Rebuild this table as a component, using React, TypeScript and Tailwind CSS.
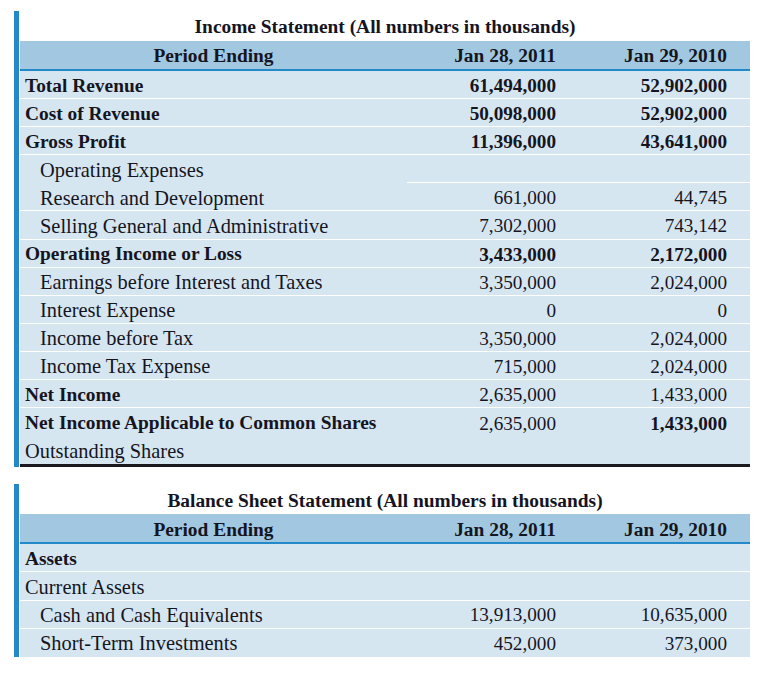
type Row = {
  label: string;
  a?: string;
  b?: string;
  bold?: boolean;
  indent?: boolean;
  boldB?: boolean;
  noLine?: boolean;
  noLabelLine?: boolean;
};

const income: Row[] = [
  { label: "Total Revenue", a: "61,494,000", b: "52,902,000", bold: true },
  { label: "Cost of Revenue", a: "50,098,000", b: "52,902,000", bold: true },
  { label: "Gross Profit", a: "11,396,000", b: "43,641,000", bold: true },
  { label: "Operating Expenses", indent: true, noLabelLine: true },
  { label: "Research and Development", a: "661,000", b: "44,745", indent: true },
  { label: "Selling General and Administrative", a: "7,302,000", b: "743,142", indent: true },
  { label: "Operating Income or Loss", a: "3,433,000", b: "2,172,000", bold: true },
  { label: "Earnings before Interest and Taxes", a: "3,350,000", b: "2,024,000", indent: true },
  { label: "Interest Expense", a: "0", b: "0", indent: true },
  { label: "Income before Tax", a: "3,350,000", b: "2,024,000", indent: true },
  { label: "Income Tax Expense", a: "715,000", b: "2,024,000", indent: true },
  { label: "Net Income", a: "2,635,000", b: "1,433,000", bold: true },
  { label: "Net Income Applicable to Common Shares", a: "2,635,000", b: "1,433,000", bold: true, boldB: true, noLine: true },
  { label: "Outstanding Shares", noLine: true },
];

const balance: Row[] = [
  { label: "Assets", bold: true },
  { label: "Current Assets" },
  { label: "Cash and Cash Equivalents", a: "13,913,000", b: "10,635,000", indent: true },
  { label: "Short-Term Investments", a: "452,000", b: "373,000", indent: true, noLine: true },
];

// which rows print their numbers in bold
const boldNums = new Set(["Total Revenue", "Cost of Revenue", "Gross Profit", "Operating Income or Loss"]);

function Table({ title, rows, closed }: { title: string; rows: Row[]; closed?: boolean }) {
  return (
    <div className="flex">
      <div className="w-[5px] bg-[#2389c9]" />
      <div className="ml-[1px] w-[730px]">
        <div className="flex h-[29px] items-center justify-center pt-[3px] text-[19.4px] font-bold">{title}</div>
        <div className="flex h-[31px] border-t border-white bg-[#a1c8e0] pt-[2px] text-[19.4px] font-bold border-b-2 border-b-[#2389c9]">
          <div className="flex w-[387px] items-center justify-center">Period Ending</div>
          <div className="flex w-[172px] items-center justify-end pr-[23px]">Jan 28, 2011</div>
          <div className="flex w-[171px] items-center justify-end pr-[23px]">Jan 29, 2010</div>
        </div>
        <div className={closed ? "border-b-[3px] border-[#1a1a20]" : ""}>
          {rows.map((r) => {
            const line = r.noLine ? "" : "border-b border-white";
            const numBold = boldNums.has(r.label);
            return (
              <div key={r.label} className="flex h-[28.1px] bg-[#d6e6f1]">
                <div
                  className={`flex w-[387px] items-center pt-[2px] ${r.noLabelLine ? "" : line} ${
                    r.indent ? "pl-[20px]" : "pl-[5px]"
                  } ${r.bold ? "text-[19.4px] font-bold" : "text-[20.4px]"}`}
                >
                  {r.label}
                </div>
                <div
                  className={`flex w-[172px] items-center justify-end pr-[23px] pt-[2px] text-[19.2px] ${line} ${
                    numBold ? "font-bold" : ""
                  }`}
                >
                  {r.a}
                </div>
                <div
                  className={`flex w-[171px] items-center justify-end pr-[23px] pt-[2px] text-[19.2px] ${line} ${
                    numBold || r.boldB ? "font-bold" : ""
                  }`}
                >
                  {r.b}
                </div>
              </div>
            );
          })}
        </div>
      </div>
    </div>
  );
}

export default function App() {
  return (
    <div className="min-h-[679px] w-[784px] bg-white pl-[14px] pt-[11px] font-['Liberation_Serif',serif] leading-none text-[#15151f]">
      <div className="flex flex-col gap-[17px]">
        <Table title="Income Statement (All numbers in thousands)" rows={income} closed />
        <Table title="Balance Sheet Statement (All numbers in thousands)" rows={balance} />
      </div>
    </div>
  );
}
